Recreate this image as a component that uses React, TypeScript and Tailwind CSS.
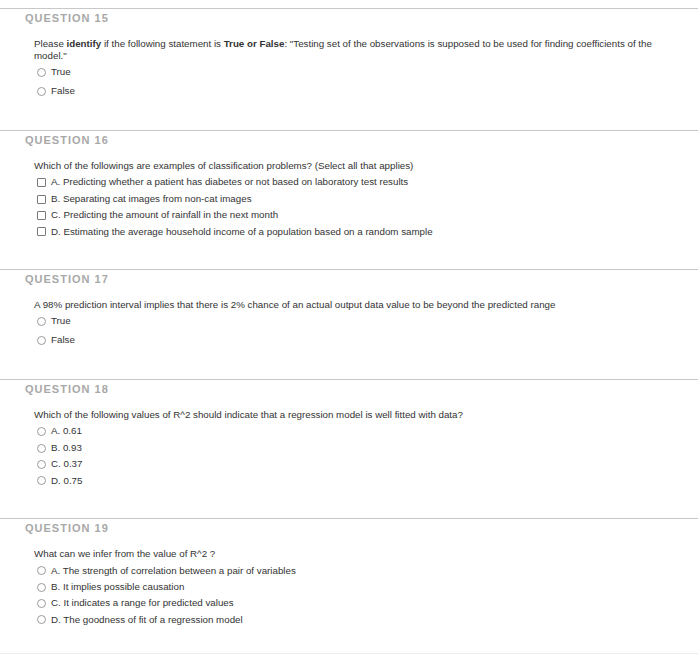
import React from "react"

type Kind = "radio" | "check"

interface Question {
  num: number
  prompt: React.ReactNode
  kind: Kind
  options: string[]
  tall?: boolean
}

const questions: Question[] = [
  {
    num: 15,
    prompt: (
      <>
        Please <b>identify</b> if the following statement is <b>True or False</b>: "Testing set of the observations is
        supposed to be used for finding coefficients of the
        <br />
        model."
      </>
    ),
    kind: "radio",
    options: ["True", "False"],
    tall: true,
  },
  {
    num: 16,
    prompt: "Which of the followings are examples of classification problems? (Select all that applies)",
    kind: "check",
    options: [
      "A. Predicting whether a patient has diabetes or not based on laboratory test results",
      "B. Separating cat images from non-cat images",
      "C. Predicting the amount of rainfall in the next month",
      "D. Estimating the average household income of a population based on a random sample",
    ],
  },
  {
    num: 17,
    prompt:
      "A 98% prediction interval implies that there is 2% chance of an actual output data value to be beyond the predicted range",
    kind: "radio",
    options: ["True", "False"],
    tall: true,
  },
  {
    num: 18,
    prompt: "Which of the following values of R^2 should indicate that a regression model is well fitted with data?",
    kind: "radio",
    options: ["A. 0.61", "B. 0.93", "C. 0.37", "D. 0.75"],
  },
  {
    num: 19,
    prompt: "What can we infer from the value of R^2 ?",
    kind: "radio",
    options: [
      "A. The strength of correlation between a pair of variables",
      "B. It implies possible causation",
      "C. It indicates a range for predicted values",
      "D. The goodness of fit of a regression model",
    ],
  },
]

function Control({ kind }: { kind: Kind }) {
  if (kind === "check") {
    return <span className="inline-block w-[9px] h-[9px] border border-[#7a7a7a] rounded-[1px] bg-white shrink-0" />
  }
  return <span className="inline-block w-[9px] h-[9px] border border-[#9a9a9a] rounded-full bg-white shrink-0" />
}

function QuestionBlock({ q, last }: { q: Question; last: boolean }) {
  return (
    <section className={`border-t border-[#c8c8c8] pt-[3px] ${last ? "pb-[25px]" : "pb-[29px]"}`}>
      <h2 className="pl-[25px] text-[11px] leading-[13px] font-bold tracking-[1px] text-[#a8a8a8]">
        QUESTION {q.num}
      </h2>
      <p className="mt-[13px] pl-[34px] pr-[10px] text-[9.75px] leading-[12px] text-[#333333]">{q.prompt}</p>
      <ul className={q.tall ? "mt-[1px]" : "mt-[2.5px]"}>
        {q.options.map((o) => (
          <li
            key={o}
            className={`flex items-center gap-[5px] pl-[37px] text-[9.75px] text-[#333333] ${
              q.tall ? "h-[19px]" : "h-[16.4px]"
            }`}
          >
            <Control kind={q.kind} />
            <span>{o}</span>
          </li>
        ))}
      </ul>
    </section>
  )
}

export default function App() {
  return (
    <div
      className="w-[698px] h-[655px] bg-white pt-[8px] overflow-hidden"
      style={{ fontFamily: '"Liberation Sans", Arial, sans-serif' }}
    >
      {questions.map((q, i) => (
        <QuestionBlock key={q.num} q={q} last={i === questions.length - 1} />
      ))}
      <div className="border-t border-[#ececec]" />
    </div>
  )
}
